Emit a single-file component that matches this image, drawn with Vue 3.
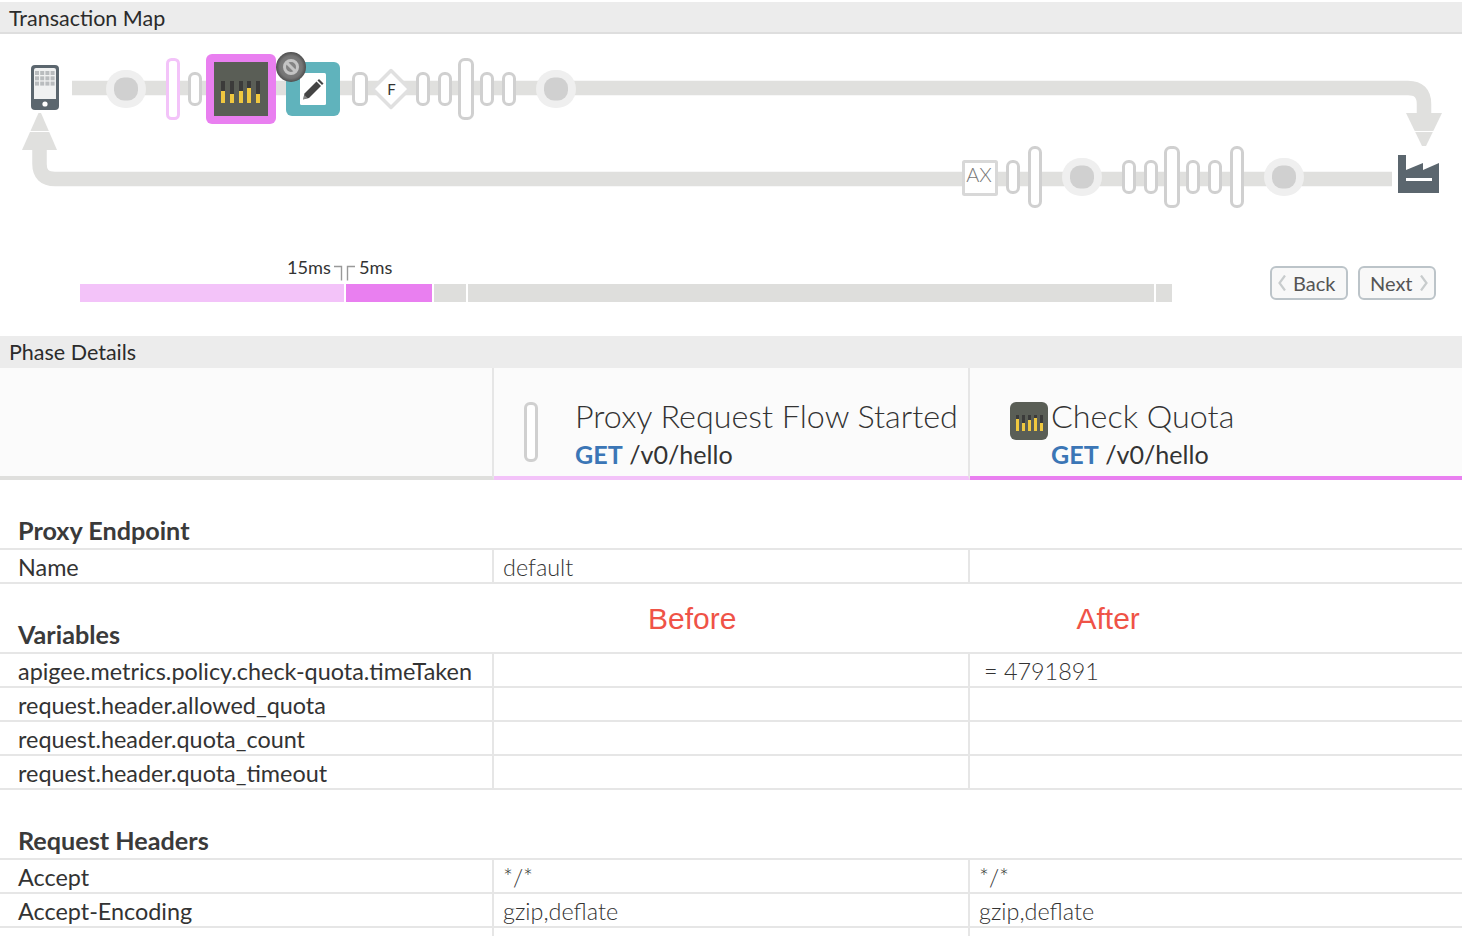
<script setup>
const topPills = [
  [188, 72, 14, 34], [352, 72, 16, 34], [416, 72, 14, 34], [438, 72, 14, 34],
  [458, 58, 16, 62], [480, 72, 14, 34], [502, 72, 14, 34],
  [1006, 160, 14, 34], [1028, 146, 14, 62], [1122, 160, 14, 34], [1144, 160, 14, 34],
  [1164, 146, 16, 62], [1186, 160, 14, 34], [1208, 160, 14, 34], [1230, 146, 14, 62]
]
const stops = [[106, 70], [536, 70], [1062, 158], [1264, 158]]
const meter = [
  [221, 91], [230, 94], [239, 91], [247, 88], [256, 94]
]
const sections = [
  {
    title: 'Proxy Endpoint',
    rows: [['Name', 'default', '']]
  },
  {
    title: 'Variables',
    notes: true,
    rows: [
      ['apigee.metrics.policy.check-quota.timeTaken', '', '= 4791891'],
      ['request.header.allowed_quota', '', ''],
      ['request.header.quota_count', '', ''],
      ['request.header.quota_timeout', '', '']
    ]
  },
  {
    title: 'Request Headers',
    rows: [
      ['Accept', '*/*', '*/*'],
      ['Accept-Encoding', 'gzip,deflate', 'gzip,deflate'],
      ['', '', '']
    ]
  }
]
</script>

<template>
  <div class="page">
    <div class="bar map-bar">Transaction Map</div>

    <svg class="map" width="1462" height="200" viewBox="0 34 1462 200">
      <defs>
        <radialGradient id="badge" cx="50%" cy="50%" r="50%">
          <stop offset="0%" stop-color="#8a8a8a" />
          <stop offset="75%" stop-color="#747474" />
          <stop offset="100%" stop-color="#4e4e4e" />
        </radialGradient>
      </defs>
      <!-- tracks -->
      <path d="M72 88H1408Q1424 88 1424 104V116" class="track" />
      <path d="M1392 179H55Q39.500 179 39.500 164V148" class="track" />
      <path d="M1406 113H1442L1426 146H1422Z" fill="#e0e0de" />
      <rect x="1412" y="131" width="24" height="1" fill="#fff" />
      <path d="M22 150H57L41 113H38.500Z" fill="#e0e0de" />
      <rect x="28" y="131" width="24" height="1" fill="#fff" />

      <!-- phone -->
      <rect x="31" y="65" width="28" height="45" rx="4" fill="#5b666e" />
      <path d="M34 70Q34 68 36 68H54Q56 68 56 70V99H34Z" fill="#f0f1f1" />
      <g fill="#b9bcbe">
        <template v-for="r in 3" :key="r">
          <rect v-for="c in 4" :key="c" :x="35 + (c - 1) * 5.200" :y="71 + (r - 1) * 5.300" width="4" height="4" />
        </template>
      </g>
      <circle cx="45" cy="104" r="2.600" fill="#fff" />

      <!-- stops -->
      <g v-for="s in stops" :key="s[0]">
        <rect :x="s[0]" :y="s[1]" width="40" height="38" rx="19" fill="#efefef" />
        <rect :x="s[0] + 8" :y="s[1] + 7.500" width="24" height="23" rx="10" fill="#d0d0d0" />
      </g>
      <!-- flow pills -->
      <rect v-for="p in topPills" :key="p[0]" :x="p[0] + 1.500" :y="p[1] + 1.500" :width="p[2] - 3" :height="p[3] - 3"
        rx="5" class="pill" />
      <rect x="167.500" y="59.500" width="11" height="59" rx="4" fill="#fff" stroke="#f3c3f9" stroke-width="3" />

      <!-- quota step -->
      <rect x="206" y="54" width="70" height="70" rx="6" fill="#e97ff0" />
      <rect x="214" y="62" width="54" height="54" fill="#5a5e56" />
      <g v-for="m in meter" :key="m[0]">
        <rect :x="m[0]" y="81" width="4" height="22" fill="#3b3b3a" />
        <rect :x="m[0]" :y="m[1]" width="4" :height="103 - m[1]" fill="#f0c83f" />
      </g>

      <!-- assign message step -->
      <rect x="286" y="62" width="54" height="54" rx="6" fill="#60b3bc" />
      <rect x="300" y="73" width="26" height="32" rx="1.500" fill="#fff" />
      <path d="M303 99.500L304.500 93.500L316.500 81.500L321 86L309 98Z" fill="#444" />
      <path d="M317.500 80.500L319 79L323.500 83.500L322 85Z" fill="#444" />
      <path d="M304.500 95L307.500 98L303 99.500Z" fill="#fff" opacity=".35" />

      <!-- skip badge -->
      <circle cx="291" cy="67" r="15" fill="url(#badge)" />
      <circle cx="291" cy="67" r="6.500" fill="none" stroke="#c4c4c4" stroke-width="3" />
      <path d="M286.500 62.500L295.500 71.500" stroke="#c4c4c4" stroke-width="3" />

      <!-- flow branch -->
      <path d="M391 70.500L409.500 89L391 107.500L372.500 89Z" fill="#fff" stroke="#e0e0e0" stroke-width="3.500" stroke-linejoin="round" />
      <text x="391.500" y="95" class="f">F</text>

      <!-- AX -->
      <rect x="963.500" y="161.500" width="33" height="33" rx="1" fill="#fff" stroke="#d8d8d8" stroke-width="3" />
      <text x="979" y="182" class="ax">AX</text>

      <!-- factory -->
      <path d="M1398 155H1406V170L1423 163V170L1439 163V193H1398Z" fill="#5b666e" />
      <rect x="1406" y="178" width="26" height="3" fill="#fff" />
    </svg>

    <div class="timeline-row">
      <div class="timeline">
        <div class="labels">
          <span class="label-before">15ms</span>
          <svg class="ticks" width="22" height="18" viewBox="0 0 22 18">
            <path d="M0 3.500H7.500V17.500M21 3.500H13.500V17.500" fill="none" stroke="#999" stroke-width="1.400" />
          </svg>
          <span class="label-after">5ms</span>
        </div>
        <div class="bars">
          <div class="seg s1"></div>
          <div class="seg s2"></div>
          <div class="seg s3"></div>
          <div class="seg s4"></div>
          <div class="seg s5"></div>
        </div>
      </div>
      <div class="nav">
        <button class="btn btn-back">
          <svg width="8" height="16" viewBox="0 0 8 16"><path d="M7 .5L1.500 8L7 15.500" fill="none" stroke="#c8cccd" stroke-width="2.200" /></svg>
          <span>Back</span>
        </button>
        <button class="btn btn-next">
          <span>Next</span>
          <svg width="8" height="16" viewBox="0 0 8 16"><path d="M1 .5L6.500 8L1 15.500" fill="none" stroke="#c8cccd" stroke-width="2.200" /></svg>
        </button>
      </div>
    </div>

    <div class="bar details-bar">Phase Details</div>

    <div class="phase-head">
      <div class="ph ph-empty"></div>
      <div class="ph ph-before">
        <span class="mini-pill"></span>
        <div class="ph-text">
          <div class="ph-title">Proxy Request Flow Started</div>
          <div class="ph-sub"><b>GET</b> /v0/hello</div>
        </div>
      </div>
      <div class="ph ph-after">
        <svg class="mini-quota" width="38" height="38" viewBox="0 0 38 38">
          <rect width="38" height="38" rx="6" fill="#5a5e56" />
          <g v-for="(y, i) in [17, 21, 18, 16, 21]" :key="i">
            <rect :x="6 + i * 6" y="13" width="3" height="16" fill="#3b3b3a" />
            <rect :x="6 + i * 6" :y="y" width="3" :height="29 - y" fill="#f0c83f" />
          </g>
        </svg>
        <div class="ph-text">
          <div class="ph-title">Check Quota</div>
          <div class="ph-sub"><b>GET</b> /v0/hello</div>
        </div>
      </div>
    </div>

    <section v-for="sec in sections" :key="sec.title" class="section">
      <div class="sec-head">
        <h3>{{ sec.title }}</h3>
        <template v-if="sec.notes">
          <div class="note note-before">Before</div>
          <div class="note note-after">After</div>
        </template>
      </div>
      <div v-for="(row, i) in sec.rows" :key="i" class="row">
        <div class="cell key">{{ row[0] }}</div>
        <div class="cell val">{{ row[1] }}</div>
        <div class="cell val" :class="{ eq: row[2].startsWith('=') }">{{ row[2] }}</div>
      </div>
    </section>
  </div>
</template>

<style scoped>
.page {
  width: 1462px;
  height: 936px;
  overflow: hidden;
  background: #fff;
  font-family: Lato, "Open Sans", sans-serif;
  color: #333;
}
.bar {
  box-sizing: border-box;
  background: #ececec;
  color: #2b2b2b;
  font-size: 21.500px;
  line-height: 32px;
  padding-left: 9px;
  white-space: nowrap;
}
.map-bar {
  margin-top: 2px;
  height: 32px;
  border-bottom: 2px solid #dedede;
}
.details-bar {
  height: 32px;
}
.map {
  display: block;
}
.track {
  fill: none;
  stroke: #e0e0de;
  stroke-width: 14.500;
}
.pill {
  fill: #fff;
  stroke: #d0d0d0;
  stroke-width: 3;
}
.f {
  font-family: Lato, sans-serif;
  font-size: 15px;
  font-weight: 400;
  fill: #333;
  text-anchor: middle;
}
.ax {
  font-family: Lato, sans-serif;
  font-size: 20px;
  font-weight: 300;
  fill: #777;
  text-anchor: middle;
}
.timeline-row {
  height: 102px;
  display: flex;
  align-items: flex-start;
  padding-left: 80px;
}
.timeline {
  width: 1092px;
}
.labels {
  display: flex;
  height: 50px;
  padding: 23px 0 0 207px;
  box-sizing: border-box;
  font-size: 18.200px;
  line-height: 20px;
  color: #333;
}
.label-before {
  width: 47px;
  flex: none;
}
.ticks {
  margin: 6px 0 0 0;
  flex: none;
}
.label-after {
  margin-left: 3px;
}
.bars {
  display: flex;
  gap: 2px;
  height: 18px;
}
.seg {
  background: #dededc;
}
.s1 { width: 264px; background: #f3c3f9; }
.s2 { width: 86px; background: #e97ff0; }
.s3 { width: 32px; }
.s4 { width: 686px; }
.s5 { width: 16px; }
.nav {
  display: flex;
  gap: 10px;
  margin: 32px 0 0 98px;
}
.btn {
  box-sizing: border-box;
  width: 78px;
  height: 34px;
  display: flex;
  align-items: center;
  padding: 0;
  background: #f8f8f8;
  border: 2px solid #bcc4c9;
  border-radius: 6px;
  color: #555;
  font-family: inherit;
  font-size: 20px;
}
.btn-back {
  padding-left: 6px;
  gap: 7px;
}
.btn-next {
  padding-left: 10px;
  gap: 7px;
}
.phase-head {
  display: grid;
  grid-template-columns: 494px 476px 492px;
  height: 112px;
  background: #fbfbfb;
}
.ph {
  box-sizing: border-box;
  display: flex;
  border-bottom: 4px solid #dfdfdd;
}
.ph-empty {
  border-right: 2px solid #e6e6e6;
}
.ph-before {
  border-right: 2px solid #e6e6e6;
  border-bottom-color: #f3c3f9;
  padding: 34px 0 0 30px;
}
.ph-after {
  border-bottom-color: #e97ff0;
  padding: 34px 0 0 40px;
}
.mini-pill {
  box-sizing: border-box;
  width: 14px;
  height: 60px;
  border: 3px solid #d0d0d0;
  border-radius: 6px;
  background: #fff;
  flex: none;
}
.mini-quota {
  flex: none;
}
.ph-before .ph-text {
  margin-left: 37px;
}
.ph-after .ph-text {
  margin-left: 3px;
}
.ph-text {
  margin-top: -6px;
}
.ph-title {
  font-size: 32.300px;
  font-weight: 300;
  line-height: 40px;
  color: #333;
  white-space: nowrap;
}
.ph-sub {
  font-size: 25.100px;
  line-height: 36px;
  margin-top: 0;
  color: #333;
}
.ph-sub b {
  color: #3b76b6;
  font-weight: 700;
}
.section {
  display: block;
}
.sec-head {
  position: relative;
  height: 70px;
  box-sizing: border-box;
  border-bottom: 2px solid #e6e6e6;
}
h3 {
  position: absolute;
  left: 18px;
  bottom: 2px;
  margin: 0;
  font-size: 25.200px;
  line-height: 32px;
  font-weight: 700;
  color: #3a3a3a;
}
.note {
  position: absolute;
  top: 17px;
  font-family: "Liberation Sans", Arial, sans-serif;
  font-size: 30px;
  line-height: 36px;
  color: #ef5347;
}
.note-before {
  left: 648px;
}
.note-after {
  left: 1076.500px;
}
.row {
  display: grid;
  grid-template-columns: 492px 476px 494px;
  height: 34px;
  box-sizing: border-box;
  border-bottom: 2px solid #e6e6e6;
}
.cell {
  box-sizing: border-box;
  height: 32px;
  padding-left: 9px;
  font-size: 23.400px;
  font-weight: 300;
  line-height: 34px;
  white-space: nowrap;
  color: #333;
}
.key {
  padding-left: 18px;
  font-weight: 400;
  color: #333;
}
.val {
  border-left: 2px solid #e6e6e6;
}
.eq {
  padding-left: 14px;
}
</style>
